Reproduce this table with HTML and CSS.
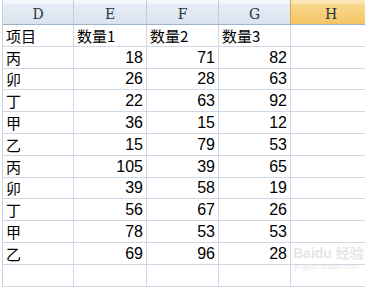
FILE: index.html
```html
<!DOCTYPE html>
<html lang="zh">
<head>
<meta charset="utf-8">
<link rel="stylesheet" href="styles.css">
</head>
<body>
<div class="sheet">
  <div class="row head">
    <div class="hc">D</div><div class="hc">E</div><div class="hc">F</div><div class="hc">G</div><div class="hc sel">H</div>
  </div>
  <div class="row"><div class="c">项目</div><div class="c">数量1</div><div class="c">数量2</div><div class="c">数量3</div><div class="c"></div></div>
  <div class="row"><div class="c">丙</div><div class="c n">18</div><div class="c n">71</div><div class="c n">82</div><div class="c"></div></div>
  <div class="row"><div class="c">卯</div><div class="c n">26</div><div class="c n">28</div><div class="c n">63</div><div class="c"></div></div>
  <div class="row"><div class="c">丁</div><div class="c n">22</div><div class="c n">63</div><div class="c n">92</div><div class="c"></div></div>
  <div class="row"><div class="c">甲</div><div class="c n">36</div><div class="c n">15</div><div class="c n">12</div><div class="c"></div></div>
  <div class="row"><div class="c">乙</div><div class="c n">15</div><div class="c n">79</div><div class="c n">53</div><div class="c"></div></div>
  <div class="row"><div class="c">丙</div><div class="c n">105</div><div class="c n">39</div><div class="c n">65</div><div class="c"></div></div>
  <div class="row"><div class="c">卯</div><div class="c n">39</div><div class="c n">58</div><div class="c n">19</div><div class="c"></div></div>
  <div class="row"><div class="c">丁</div><div class="c n">56</div><div class="c n">67</div><div class="c n">26</div><div class="c"></div></div>
  <div class="row"><div class="c">甲</div><div class="c n">78</div><div class="c n">53</div><div class="c n">53</div><div class="c"></div></div>
  <div class="row"><div class="c">乙</div><div class="c n">69</div><div class="c n">96</div><div class="c n">28</div><div class="c"></div></div>
  <div class="row"><div class="c"></div><div class="c"></div><div class="c"></div><div class="c"></div><div class="c"></div></div>
</div>
<div class="wm">
  <div class="wm-main">Baidu 经验</div>
  <div class="wm-url">jingyan.baidu.com</div>
</div>
</body>
</html>
```
FILE: styles.css
```css
html, body {
  margin: 0;
  padding: 0;
  background: #ffffff;
  width: 365px;
  height: 288px;
  overflow: hidden;
}
.sheet {
  margin-left: 2px;
  border-left: 1px solid #c9d1de;
  font-family: "Noto Sans CJK SC", "Liberation Sans", sans-serif;
}
.row {
  display: grid;
  grid-template-columns: 71px 73px 72px 72px 80px;
  height: 21.8px;
}
.row.head {
  height: 25px;
  background: linear-gradient(#f6f8fb 0, #f6f8fb 3px, #e6edf6 4px, #dae3ee 24px);
  border-bottom: 1px solid #9fb3c9;
  box-sizing: border-box;
}
.hc {
  border-right: 1px solid #c3cedc;
  display: flex;
  align-items: center;
  justify-content: center;
  font-family: "DejaVu Serif", "Liberation Serif", serif;
  font-size: 14px;
  color: #27323f;
  padding-top: 3px;
}
.hc.sel {
  background: linear-gradient(#fbe7b8 0, #fbe7b8 3px, #f9d98f 4px, #f4c463 24px);
  border-right: none;
  border-left: 1px solid #d5a94e;
  margin-left: -1px;
}
.c {
  box-sizing: border-box;
  border-right: 1px solid #d0d7e5;
  border-bottom: 1px solid #d0d7e5;
  display: flex;
  align-items: flex-end;
  padding: 0 3px 1px 3px;
  font-size: 15px;
  line-height: 18px;
  color: #000;
  white-space: nowrap;
  overflow: hidden;
}
.c.n {
  justify-content: flex-end;
  font-family: "Liberation Sans", sans-serif;
  font-size: 16px;
  padding-right: 3px;
}
.wm {
  position: absolute;
  left: 293px;
  top: 244px;
  color: rgba(190, 190, 190, 0.4);
  font-family: "Liberation Sans", "Noto Sans CJK SC", sans-serif;
  pointer-events: none;
}
.wm-main {
  font-size: 14px;
  font-weight: bold;
  line-height: 18px;
}
.wm-url {
  font-size: 8px;
  line-height: 10px;
  margin-left: 1px;
}
```
